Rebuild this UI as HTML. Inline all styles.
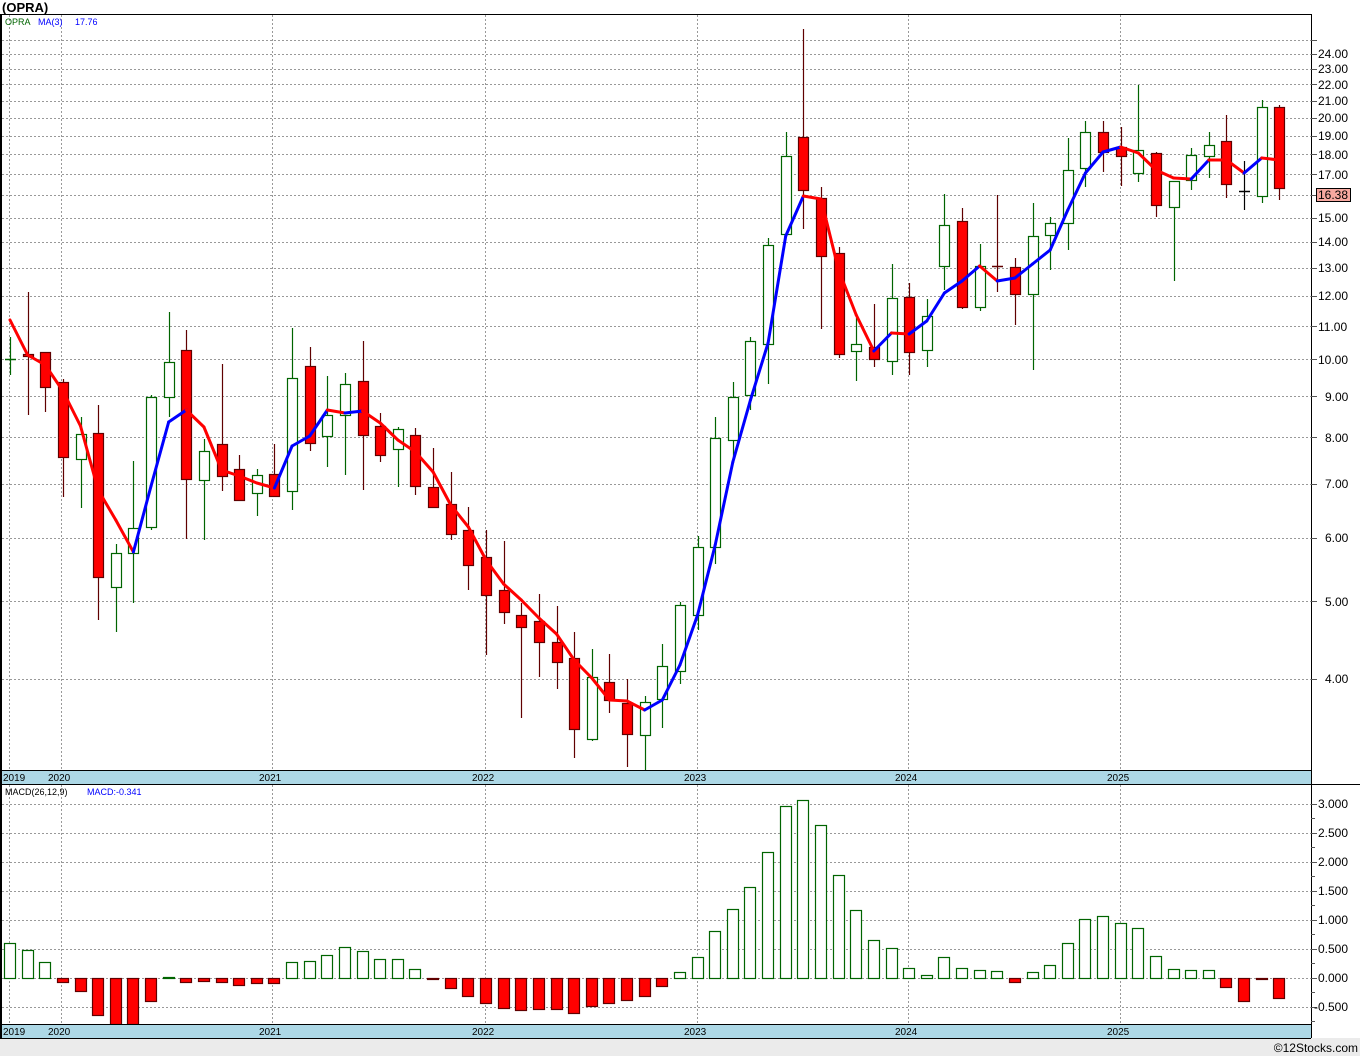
<!DOCTYPE html>
<html><head><meta charset="utf-8"><style>
html,body{margin:0;padding:0;background:#fff;}
body{width:1360px;height:1056px;overflow:hidden;position:relative;font-family:"Liberation Sans","DejaVu Sans",sans-serif;}
svg{position:absolute;left:0;top:0;}
</style></head><body>
<svg id="s" width="1360" height="1056" xmlns="http://www.w3.org/2000/svg" font-family="Liberation Sans, DejaVu Sans, sans-serif">
<rect x="0" y="0" width="1360" height="1056" fill="#fff"/>
<rect x="0" y="1038" width="1360" height="18" fill="#ebebeb"/>
<g id="grid"></g>
<g id="mac"></g>
<g id="cand"></g>
<g id="ma"></g>
<!-- axis strips -->
<rect x="0" y="770" width="1311" height="14" fill="#add8e6"/>
<rect x="0" y="1024" width="1311" height="14" fill="#add8e6"/>
<line x1="0" y1="14.5" x2="1311" y2="14.5" stroke="#000"/>
<line x1="0" y1="770.5" x2="1311" y2="770.5" stroke="#000"/>
<line x1="0" y1="784.5" x2="1360" y2="784.5" stroke="#000"/>
<line x1="0" y1="1024.5" x2="1311" y2="1024.5" stroke="#000"/>
<line x1="0" y1="1038.5" x2="1311" y2="1038.5" stroke="#000"/>
<line x1="1311.5" y1="14" x2="1311.5" y2="1038" stroke="#000"/>
<line x1="1" y1="14" x2="1" y2="1038" stroke="#000" stroke-width="2"/>
<g id="ticks"></g>
<text x="2" y="12" font-size="13" font-weight="bold" fill="#000">(OPRA)</text>
<text x="5" y="25" font-size="9" fill="#006400">OPRA</text>
<text x="38" y="25" font-size="9" fill="#0000ff">MA(3)</text>
<text x="75" y="25" font-size="9" fill="#0000ff">17.76</text>
<text x="5" y="795" font-size="9" fill="#000">MACD(26,12,9)</text>
<text x="87" y="795" font-size="9" fill="#0000ff">MACD:-0.341</text>
<g font-size="10" fill="#000">
<text x="3" y="781">2019</text><text x="48" y="781">2020</text><text x="259" y="781">2021</text><text x="472" y="781">2022</text><text x="684" y="781">2023</text><text x="895" y="781">2024</text><text x="1107" y="781">2025</text>
<text x="3" y="1035">2019</text><text x="48" y="1035">2020</text><text x="259" y="1035">2021</text><text x="472" y="1035">2022</text><text x="684" y="1035">2023</text><text x="895" y="1035">2024</text><text x="1107" y="1035">2025</text>
</g>
<g font-size="12" fill="#000" id="plab">
<text x="1318" y="58">24.00</text><text x="1318" y="73">23.00</text><text x="1318" y="89">22.00</text><text x="1318" y="105">21.00</text><text x="1318" y="122">20.00</text><text x="1318" y="140">19.00</text><text x="1318" y="159">18.00</text><text x="1318" y="179">17.00</text><text x="1318" y="222">15.00</text><text x="1318" y="246">14.00</text><text x="1318" y="272">13.00</text><text x="1318" y="300">12.00</text><text x="1318" y="331">11.00</text><text x="1318" y="364">10.00</text><text x="1325" y="401">9.00</text><text x="1325" y="442">8.00</text><text x="1325" y="488">7.00</text><text x="1325" y="542">6.00</text><text x="1325" y="606">5.00</text><text x="1325" y="683">4.00</text>
<text x="1318" y="808">3.000</text><text x="1318" y="837">2.500</text><text x="1318" y="866">2.000</text><text x="1318" y="895">1.500</text><text x="1318" y="924">1.000</text><text x="1318" y="953">0.500</text><text x="1318" y="982">0.000</text><text x="1314" y="1011">-0.500</text>
</g>
<rect x="1316.5" y="188.5" width="34" height="13" fill="#f7a8a0" stroke="#000"/>
<text x="1318" y="199" font-size="12" fill="#000">16.38</text>
<text x="1358" y="1052" font-size="12" fill="#000" text-anchor="end">©12Stocks.com</text>
</svg>
<script>
var NS="http://www.w3.org/2000/svg";
function el(p,t,a){var e=document.createElementNS(NS,t);for(var k in a)e.setAttribute(k,a[k]);document.getElementById(p).appendChild(e);return e;}
function py(p){return 679-(Math.log(p)-Math.log(4))*348.8;}
// grid
var vx=[9,61,272,485,697,908,1120];
vx.forEach(function(x){el("grid","line",{x1:x+.5,y1:15,x2:x+.5,y2:770,stroke:"#999","stroke-dasharray":"2,2"});el("grid","line",{x1:x+.5,y1:785,x2:x+.5,y2:1024,stroke:"#999","stroke-dasharray":"2,2"});});
var pl=[25,24,23,22,21,20,19,18,17,16,15,14,13,12,11,10,9,8,7,6,5,4];
pl.forEach(function(p){var y=Math.round(py(p))+.5;el("grid","line",{x1:2,y1:y,x2:1311,y2:y,stroke:"#999","stroke-dasharray":"2,2"});el("ticks","line",{x1:1311,y1:y,x2:1317,y2:y,stroke:"#555"});});
[804,833,862,891,920,949,978,1007].forEach(function(y){el("grid","line",{x1:2,y1:y+.5,x2:1311,y2:y+.5,stroke:"#999","stroke-dasharray":"2,2"});el("ticks","line",{x1:1311,y1:y+.5,x2:1317,y2:y+.5,stroke:"#555"});});
[818,847,876,905,934,963,992,1021].forEach(function(y){el("ticks","line",{x1:1311,y1:y+.5,x2:1315,y2:y+.5,stroke:"#555"});});
// candles: [type, high, low, bodyTop, bodyBot]  g=green r=red d=doji
var C=[["d",337,375,359,359],["r",292,415,354,356],["r",352,412,352,387],["r",379,497,382,457],["g",417,508,434,459],["r",405,620,433,577],["g",544,632,553,587],["g",461,603,528,553],["g",395,530,397,527],["g",312,417,362,397],["r",330,539,350,479],["g",439,540,451,480],["r",364,491,444,476],["r",455,500,469,500],["g",469,516,475,493],["r",444,497,474,496],["g",328,510,378,491],["r",347,451,366,443],["g",376,467,415,436],["g",373,475,384,415],["r",341,490,381,435],["r",413,462,426,455],["g",427,487,429,449],["r",428,495,435,486],["r",448,508,487,507],["r",472,540,504,534],["r",507,590,530,565],["r",530,655,557,595],["r",541,624,590,612],["r",603,718,615,627],["r",594,677,621,642],["r",606,689,642,662],["r",632,758,658,729],["g",649,741,677,739],["r",654,713,682,700],["r",679,767,703,734],["g",696,770,702,735],["g",644,728,666,699],["g",602,684,605,671],["g",536,630,547,615],["g",417,564,438,547],["g",382,460,397,440],["g",337,410,341,395],["g",238,384,245,344],["g",132,235,156,234],["r",29,229,137,190],["r",187,329,198,256],["r",247,358,253,354],["g",318,381,344,351],["r",304,367,347,359],["g",264,375,298,361],["r",283,375,297,352],["g",299,367,316,350],["g",194,290,225,266],["r",208,309,221,307],["g",244,311,266,307],["k",195,292,266,266],["r",258,325,267,294],["g",203,370,236,294],["g",217,270,223,235],["g",138,250,170,223],["g",121,187,132,168],["r",121,172,132,152],["r",127,186,147,156],["g",85,182,150,173],["r",152,217,153,205],["g",181,281,181,207],["g",148,190,155,180],["g",132,178,145,156],["r",115,198,141,184],["b",161,210,191,191],["g",100,203,107,196],["r",105,200,107,188]];
C.forEach(function(c,i){var x=Math.round(10+17.63*i),t=c[0];
 var col=t=="g"?"#006400":t=="b"?"#000":t=="d"?"#006400":"#600000";
 if(t=="d"||t=="k"||t=="b"){el("cand","line",{x1:x+.5,y1:c[1],x2:x+.5,y2:c[2],stroke:col,"stroke-width":1.2});el("cand","line",{x1:x-5,y1:c[3]+.5,x2:x+6,y2:c[3]+.5,stroke:col,"stroke-width":1.5});return;}
 el("cand","line",{x1:x+.5,y1:c[1],x2:x+.5,y2:c[2],stroke:col,"stroke-width":1.2});
 el("cand","rect",{x:x-4.5,y:c[3]+.5,width:10,height:Math.max(1,c[4]-c[3]),fill:t=="g"?"#fff":"#ff0000",stroke:col,"stroke-width":1.2});});
// MA
var M=[320,355,365,391,426,490,520,552,486,422,410,427,470,476,483,488,446,436,410,413,411,423,440,452,472,505,527,560,584,600,618,634,660,678,700,701,710,700,665,615,545,462,400,343,236,196,199,270,315,351,333,334,321,293,281,266,281,278,264,250,210,173,152,147,153,170,178,179,160,160,173,158,160];
for(var i=1;i<M.length;i++){var x0=10+17.63*(i-1),x1=10+17.63*i;el("ma","line",{x1:x0,y1:M[i-1],x2:x1,y2:M[i],stroke:M[i]<M[i-1]?"#0000ff":"#ff0000","stroke-width":3,"stroke-linecap":"round"});}
// MACD
var B=[943,950,962,982,991,1015,1024,1024,1001,977,982,981,982,985,983,983,962,961,955,947,951,959,959,969,979,988,996,1003,1008,1010,1009,1009,1013,1006,1003,1000,996,986,972,957,931,909,887,852,806,800,825,875,910,940,948,968,975,957,968,970,971,982,972,965,943,919,916,923,928,956,969,970,970,987,1001,979,998];
B.forEach(function(y,i){var x=Math.round(10+17.63*i);
 if(y<978) el("mac","rect",{x:x-5.5,y:y+.5,width:11,height:978-y,fill:"#fff",stroke:"#006400","stroke-width":1.2});
 else el("mac","rect",{x:x-5.5,y:978.5,width:11,height:Math.max(1,y-978),fill:"#ff0000",stroke:"#600000","stroke-width":1.2});});
</script>
</body></html>
